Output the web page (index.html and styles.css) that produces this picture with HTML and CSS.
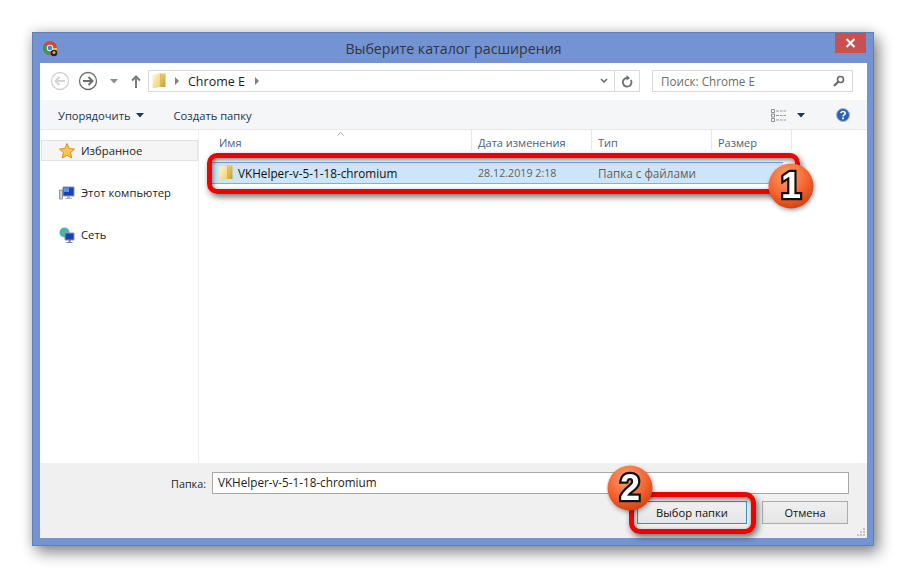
FILE: index.html
```html
<!DOCTYPE html>
<html lang="ru">
<head>
<meta charset="utf-8">
<title>Выберите каталог расширения</title>
<link rel="stylesheet" href="styles.css">
</head>
<body>
<svg class="defs" width="0" height="0" aria-hidden="true">
  <defs>
    <linearGradient id="fold" x1="0" y1="0" x2="1" y2="1">
      <stop offset="0" stop-color="#fff8cf"/>
      <stop offset="1" stop-color="#eccb66"/>
    </linearGradient>
    <linearGradient id="foldback" x1="0" y1="0" x2="1" y2="1">
      <stop offset="0" stop-color="#f6dc84"/>
      <stop offset="1" stop-color="#c89c30"/>
    </linearGradient>
    <symbol id="folder" viewBox="0 0 14 16">
      <path d="M6 .5h7.500V14H6z" fill="url(#foldback)"/>
      <path d="M.5 2 9 .5V13.500L.5 15.500z" fill="url(#fold)"/>
      <path d="M9 .5V13.500l-.8.2V.6z" fill="#d8b24a"/>
    </symbol>
    <radialGradient id="badge" cx=".42" cy=".28" r=".85">
      <stop offset="0" stop-color="#ffa070"/>
      <stop offset=".55" stop-color="#f4622c"/>
      <stop offset="1" stop-color="#c23508"/>
    </radialGradient>
  </defs>
</svg>
<main class="stage">
  <section class="window">
    <header class="titlebar">
      <svg class="app-icon" width="15" height="16" viewBox="0 0 15 16">
        <circle cx="7" cy="7" r="7" fill="#d9443a"/>
        <path d="M7 7 1 10.500A7 7 0 0 1 1 3.500z" fill="#3b9a4e"/>
        <path d="M7 14A7 7 0 0 1 1 10.500L7 7z" fill="#3b9a4e"/>
        <path d="M7 7h7a7 7 0 0 1-4 6.300z" fill="#f2c832"/>
        <circle cx="7" cy="7" r="3.200" fill="#fff"/>
        <circle cx="7" cy="7" r="2.400" fill="#4a85e0"/>
        <circle cx="11" cy="12" r="3.300" fill="#2b2320"/>
        <circle cx="11" cy="11.500" r="1.500" fill="#d7a35e"/>
      </svg>
      <h1 class="title">Выберите каталог расширения</h1>
      <button class="close" aria-label="Закрыть">
        <svg width="11" height="10" viewBox="0 0 11 10"><path d="M1.500 1 9.500 9M9.500 1 1.500 9" stroke="#fff" stroke-width="2"/></svg>
      </button>
    </header>
    <div class="client">
      <nav class="navbar">
        <svg class="nav-round" width="20" height="20" viewBox="0 0 20 20"><circle cx="10" cy="10" r="8.500" fill="#fff" stroke="#d0d0d0" stroke-width="1.300"/><path d="M15 10H6M9.500 6 5.500 10l4 4" fill="none" stroke="#d4d4d4" stroke-width="2"/></svg>
        <svg class="nav-round" width="20" height="20" viewBox="0 0 20 20"><circle cx="10" cy="10" r="8.500" fill="#fff" stroke="#6e6e6e" stroke-width="1.300"/><path d="M5 10h9M10.500 6l4 4-4 4" fill="none" stroke="#6e6e6e" stroke-width="2"/></svg>
        <svg class="nav-drop" width="8" height="5" viewBox="0 0 8 5"><path d="M0 0h8L4 4.500z" fill="#8c8c8c"/></svg>
        <svg class="nav-up" width="10" height="13" viewBox="0 0 10 13"><path d="M5 13V2M1 5.500 5 1.500l4 4" fill="none" stroke="#7c7c7c" stroke-width="2"/></svg>
        <div class="address">
          <svg class="addr-folder" width="14" height="16"><use href="#folder"/></svg>
          <svg class="crumb" width="4" height="8" viewBox="0 0 4 8"><path d="M0 0l4 4-4 4z" fill="#808080"/></svg>
          <span class="addr-text">Chrome E</span>
          <svg class="crumb" width="4" height="8" viewBox="0 0 4 8"><path d="M0 0l4 4-4 4z" fill="#808080"/></svg>
          <svg class="addr-chevron" width="8" height="6" viewBox="0 0 8 6"><path d="M1 1l3 3 3-3" fill="none" stroke="#666" stroke-width="1.500"/></svg>
          <span class="addr-refresh">
            <svg width="12" height="13" viewBox="0 0 12 13"><path d="M9.800 5A4.300 4.300 0 1 1 6 3" fill="none" stroke="#707070" stroke-width="1.800"/><path d="M5.500 0v5.500L9 3z" fill="#707070"/></svg>
          </span>
        </div>
        <div class="search">
          <span class="search-text">Поиск: Chrome E</span>
          <svg width="12" height="12" viewBox="0 0 12 12"><circle cx="7.500" cy="4.500" r="3" fill="none" stroke="#666" stroke-width="1.600"/><path d="M5.200 6.800 1 11" stroke="#666" stroke-width="2.200"/></svg>
        </div>
      </nav>
      <div class="toolbar">
        <span class="tool">Упорядочить</span>
        <svg class="tool-drop" width="8" height="5" viewBox="0 0 8 5"><path d="M0 0h8L4 4.500z" fill="#1e3a5a"/></svg>
        <span class="tool tool-new">Создать папку</span>
        <svg class="view-icon" width="15" height="13" viewBox="0 0 15 13">
          <path d="M.500.500h3v3h-3zM.500 5h3v3h-3zM.500 9.500h3v3h-3z" fill="#fff" stroke="#8c8c8c"/>
          <path d="M5 2h3M9 2h2.500M12.500 2H15M5 6.500h3M9 6.500h2.500M12.500 6.500H15M5 11h3M9 11h2.500M12.500 11H15" stroke="#9a9a9a"/>
        </svg>
        <svg class="view-drop" width="8" height="5" viewBox="0 0 8 5"><path d="M0 0h8L4 4.500z" fill="#1e3a5a"/></svg>
        <svg class="help" width="14" height="14" viewBox="0 0 14 14"><circle cx="7" cy="7" r="6.500" fill="#2a62b8" stroke="#9fb8dc"/><path d="M5 5.300C5 2.800 9.200 3 9.200 5.200 9.200 6.800 7 6.800 7 8.500" fill="none" stroke="#fff" stroke-width="1.600"/><path d="M6.100 9.500h1.800v1.800H6.100z" fill="#fff"/></svg>
      </div>
      <div class="content">
        <aside class="sidebar">
          <div class="side-item side-selected">
            <svg width="16" height="16" viewBox="0 0 16 16"><path d="M8 .5l2.300 5 5.200.6-3.900 3.500 1.100 5.400L8 12.300 3.300 15l1.100-5.400L.5 6.100l5.200-.6z" fill="#f7c64a" stroke="#e08a28"/></svg>
            <span>Избранное</span>
          </div>
          <div class="side-item side-computer">
            <svg width="16" height="16" viewBox="0 0 16 16"><path d="M.5 5h3v9h-3z" fill="#c8ced4" stroke="#7b858e" stroke-width=".8"/><path d="M4 2h11v9H4z" fill="#1d3fb8" stroke="#8d99a3"/><path d="M5 3h5v4H5z" fill="#5f8fe8"/><path d="M8 11h3v2h2v1H6v-1h2z" fill="#aab2ba"/></svg>
            <span>Этот компьютер</span>
          </div>
          <div class="side-item side-network">
            <svg width="16" height="16" viewBox="0 0 16 16"><circle cx="5.500" cy="5.500" r="5" fill="#4bb0c8"/><path d="M2 3h4v3H3zM6 8h3v2H6z" fill="#5ab65a"/><path d="M6 6h9v7H6z" fill="#1d3fb8" stroke="#8d99a3"/><path d="M9.500 13h2v2h2v1h-6v-1h2z" fill="#7b858e"/></svg>
            <span>Сеть</span>
          </div>
        </aside>
        <div class="list">
          <div class="sort-mark"><svg width="7" height="4" viewBox="0 0 7 4"><path d="M.5 3.500 3.500.5l3 3" fill="none" stroke="#a0a6ac"/></svg></div>
          <div class="columns">
            <span class="col col-name">Имя</span>
            <span class="col col-date">Дата изменения</span>
            <span class="col col-type">Тип</span>
            <span class="col col-size">Размер</span>
          </div>
          <div class="row">
            <span class="cell-name">
              <svg width="14" height="16"><use href="#folder"/></svg>
              <span>VKHelper-v-5-1-18-chromium</span>
            </span>
            <span class="cell-date">28.12.2019 2:18</span>
            <span class="cell-type">Папка с файлами</span>
          </div>
        </div>
      </div>
      <footer class="footer">
        <div class="field-row">
          <label class="field-label" for="folder-name">Папка:</label>
          <div class="field" id="folder-name">VKHelper-v-5-1-18-chromium</div>
        </div>
        <div class="actions">
          <button class="btn btn-primary">Выбор папки</button>
          <button class="btn btn-cancel">Отмена</button>
        </div>
        <svg class="grip" width="9" height="9" viewBox="0 0 9 9"><path d="M6 0h2v2H6zM3 3h2v2H3zM6 3h2v2H6zM0 6h2v2H0zM3 6h2v2H3zM6 6h2v2H6z" fill="#c4c4c4"/></svg>
      </footer>
    </div>
  </section>

  <div class="mark mark-row"></div>
  <div class="mark mark-btn"></div>
  <div class="badge badge-one">
    <svg width="46" height="46" viewBox="0 0 46 46"><circle cx="23" cy="23" r="22.500" fill="url(#badge)"/></svg>
    <span class="badge-num">1</span>
  </div>
  <div class="badge badge-two">
    <svg width="46" height="46" viewBox="0 0 46 46"><circle cx="23" cy="23" r="22.500" fill="url(#badge)"/></svg>
    <span class="badge-num">2</span>
  </div>
</main>
</body>
</html>
```
FILE: styles.css
```css
* { box-sizing: border-box; }
html, body { margin: 0; height: 100%; background: #fff; overflow: hidden; }
body { font-family: "Open Sans", "Noto Sans", sans-serif; font-size: 11.200px; color: #1e1e1e; }
.defs { position: absolute; }
button { font: inherit; }

.stage { position: relative; width: 906px; height: 578px; padding: 32px 32px 0; }

.window {
  width: 842px; height: 514px;
  background: #7393d3;
  border: 1px solid #5f7fb8;
  box-shadow: 5px 7px 14px rgba(0,0,0,.42), 0 0 12px rgba(0,0,0,.18);
  display: flex; flex-direction: column;
  padding: 0 6px 7px 7px;
}

.titlebar { height: 30px; display: flex; align-items: center; position: relative; flex: none; }
.app-icon { margin: 1px 0 0 3px; }
.title {
  position: absolute; left: 0; right: 0; top: 6px; margin: 0;
  text-align: center; font-size: 14.200px; font-weight: 400; color: #2f3642; line-height: 20px;
}
.close {
  position: absolute; right: 1px; top: 0; width: 31px; height: 20px;
  background: #c75050; border: 0; padding: 0;
  display: flex; align-items: center; justify-content: center;
}

.client { flex: 1; display: flex; flex-direction: column; background: #fff; min-height: 0; }

.navbar { height: 37px; flex: none; display: flex; align-items: center; padding: 0 14px 1px 10px; }
.nav-round { margin-right: 8px; }
.nav-round + .nav-round { margin-right: 12px; }
.nav-drop { margin-right: 13px; }
.nav-up { margin-right: 7px; }

.address {
  width: 492px; height: 22px; border: 1px solid #d9d9d9;
  display: flex; align-items: center; padding-left: 3px; margin-right: 12px;
}
.addr-folder { margin-right: 9px; }
.crumb { margin-right: 9px; }
.addr-text { margin-right: 10px; font-size: 12.500px; }
.addr-chevron { margin-left: auto; margin-right: 6px; }
.addr-refresh {
  width: 25px; height: 100%; border-left: 1px solid #d9d9d9;
  display: flex; align-items: center; justify-content: center;
}

.search {
  width: 201px; height: 22px; border: 1px solid #d9d9d9;
  display: flex; align-items: center; justify-content: space-between; padding: 0 7px 0 8px;
}
.search-text { color: #6d6d6d; font-size: 11.700px; }

.toolbar {
  height: 30px; flex: none; background: #f5f6f7; border-bottom: 1px solid #e6e8ea;
  display: flex; align-items: center; padding: 1px 17px 0 18px;
}
.tool { color: #1e3250; }
.tool-drop { margin-left: 5px; }
.tool-new { margin-left: 30px; }
.view-icon { margin-left: auto; }
.view-drop { margin-left: 11px; }
.help { margin-left: 31px; }

.content { flex: 1; display: flex; min-height: 0; }

.sidebar {
  width: 159px; flex: none; border-right: 1px solid #efefef;
  padding: 10px 0 0 1px; display: flex; flex-direction: column; gap: 21px;
}
.side-item { height: 21px; display: flex; align-items: center; gap: 6px; padding-left: 18px; font-size: 11.300px; }
.side-selected { background: #f5f5f5; border: 1px solid #e2e2e2; padding-left: 17px; margin-right: 0; }

.list { flex: 1; position: relative; }
.sort-mark { position: absolute; left: 138px; top: 2px; line-height: 0; }
.columns { height: 20px; display: flex; align-items: center; color: #4c607a; }
.col { height: 100%; display: flex; align-items: flex-end; padding-left: 6px; border-right: 1px solid #e8e8e8; line-height: 14px; font-size: 11px; }
.col-name { width: 273px; padding-left: 20px; }
.col-date { width: 120px; }
.col-type { width: 120px; }
.col-size { width: 80px; }

.row {
  margin: 12px 0 0 13px; width: 571px; height: 22px;
  background: #cde5f8; border: 1px solid #7eb0dc; border-width: 1px 0;
  display: flex; align-items: center;
}
.cell-name { width: 266px; display: flex; align-items: center; gap: 5px; padding-left: 7px; color: #111; font-size: 11.750px; }
.cell-date { width: 120px; color: #5f5f5f; font-size: 10.700px; }
.cell-type { color: #5f5f5f; font-size: 11.700px; }

.footer { height: 75px; flex: none; background: #f0f0f0; position: relative; padding: 9px 18px 0 0; }
.field-row { display: flex; align-items: center; justify-content: flex-end; }
.field-label { margin-right: 6px; font-size: 10.800px; }
.field {
  width: 637px; height: 22px; border: 1px solid #a8a8a8; background: #fff;
  padding-left: 5px; line-height: 19px; font-size: 11.700px; color: #222;
}
.actions { display: flex; justify-content: flex-end; margin-top: 7px; gap: 15px; padding-right: 1px; }
.btn {
  height: 23px; border: 1px solid #acacac; padding: 0;
  background: linear-gradient(#f0f0f0, #e5e5e5); color: #111;
}
.btn-primary { width: 110px; border-color: #3f8ccc; }
.btn-cancel { width: 86px; font-size: 11px; }
.grip { position: absolute; right: 1px; bottom: 1px; }

.mark {
  position: absolute; border: 5px solid #ea0404; border-radius: 10px;
  box-shadow: 2px 3px 6px rgba(0,0,0,.55), inset 1px 2px 5px rgba(0,0,0,.5);
}
.mark-row { left: 207px; top: 153px; width: 593px; height: 41px; }
.mark-btn { left: 629px; top: 492px; width: 127px; height: 42px; border-radius: 11px; }

.badge { position: absolute; width: 46px; height: 46px; filter: drop-shadow(1px 2px 2px rgba(0,0,0,.35)); }
.badge-one { left: 768px; top: 163px; }
.badge-two { left: 607px; top: 465px; }
.badge svg { display: block; }
.badge-num {
  position: absolute; left: 0; right: 0; top: 0; text-align: center;
  font-family: "Liberation Sans", sans-serif; font-weight: 700; font-size: 36px; line-height: 46px;
  color: #fff; -webkit-text-stroke: 4.500px #111; paint-order: stroke fill;
}
```
